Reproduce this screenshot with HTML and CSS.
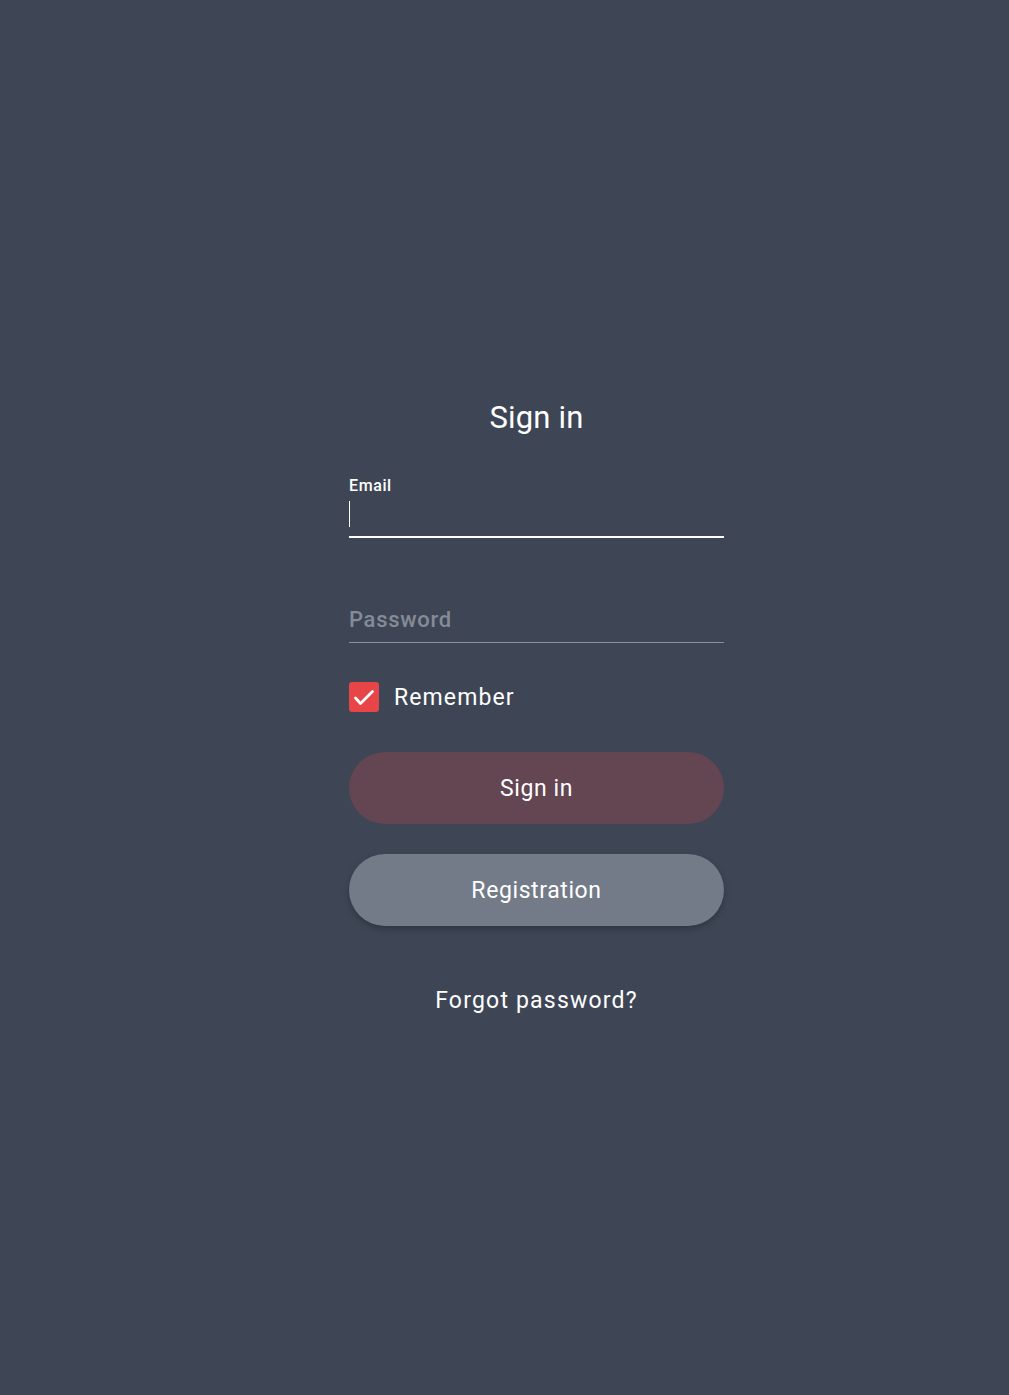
FILE: index.html
```html
<!DOCTYPE html>
<html>
<head>
<meta charset="utf-8">
<link rel="stylesheet" href="styles.css">
</head>
<body>
<div class="page">
  <form class="form">
    <h1 class="title">Sign in</h1>
    <div class="field field-active">
      <label class="label">Email</label>
      <div class="input-line"><span class="cursor"></span></div>
    </div>
    <div class="field field-pass">
      <div class="placeholder">Password</div>
    </div>
    <div class="remember">
      <span class="check"><svg width="30" height="30" viewBox="0 0 30 30"><path d="M6.5 16 L11.5 21.5 L23.5 9.5" fill="none" stroke="#fff" stroke-width="2.8" stroke-linecap="round" stroke-linejoin="round"/></svg></span>
      <span class="remember-text">Remember</span>
    </div>
    <div class="btn btn-signin">Sign in</div>
    <div class="btn btn-reg">Registration</div>
    <div class="forgot">Forgot password?</div>
  </form>
</div>
</body>
</html>
```
FILE: styles.css
```css
html, body {
  margin: 0;
  padding: 0;
  background: #3e4656;
  font-family: Roboto, "Noto Sans", sans-serif;
  color: #fff;
}
.page {
  height: 1395px;
  display: flex;
  justify-content: center;
  padding-left: 64px;
  box-sizing: border-box;
}
.form {
  width: 375px;
  padding-top: 398px;
  display: flex;
  flex-direction: column;
}
.title {
  margin: 0;
  font-weight: 400;
  font-size: 31px;
  line-height: 40px;
  text-align: center;
  letter-spacing: 0.2px;
}
.field-active {
  margin-top: 38px;
}
.label {
  display: block;
  font-size: 16px;
  line-height: 20px;
  font-weight: 500;
  letter-spacing: 0.6px;
}
.input-line {
  height: 40px;
  border-bottom: 2px solid #fff;
  position: relative;
}
.cursor {
  position: absolute;
  left: 0;
  top: 5px;
  width: 1px;
  height: 26px;
  background: #fff;
}
.field-pass {
  margin-top: 68px;
  border-bottom: 1px solid #8a909b;
}
.placeholder {
  font-size: 22px;
  line-height: 28px;
  padding-bottom: 8px;
  color: #858b97;
  font-weight: 500;
  letter-spacing: 0.7px;
}
.remember {
  margin-top: 39px;
  display: flex;
  align-items: center;
  height: 30px;
}
.check {
  width: 30px;
  height: 30px;
  border-radius: 3px;
  background: #e84548;
  display: flex;
  align-items: center;
  justify-content: center;
}
.remember-text {
  margin-left: 15px;
  font-size: 23px;
  letter-spacing: 1.1px;
}
.btn {
  height: 72px;
  border-radius: 36px;
  display: flex;
  align-items: center;
  justify-content: center;
  font-size: 23px;
  letter-spacing: 0.6px;
}
.btn-signin {
  margin-top: 40px;
  background: #644552;
}
.btn-reg {
  margin-top: 30px;
  background: #737a88;
  box-shadow: 0 3px 6px rgba(0,0,0,0.25);
}
.forgot {
  margin-top: 61px;
  text-align: center;
  font-size: 23px;
  line-height: 28px;
  letter-spacing: 1.2px;
}
```
